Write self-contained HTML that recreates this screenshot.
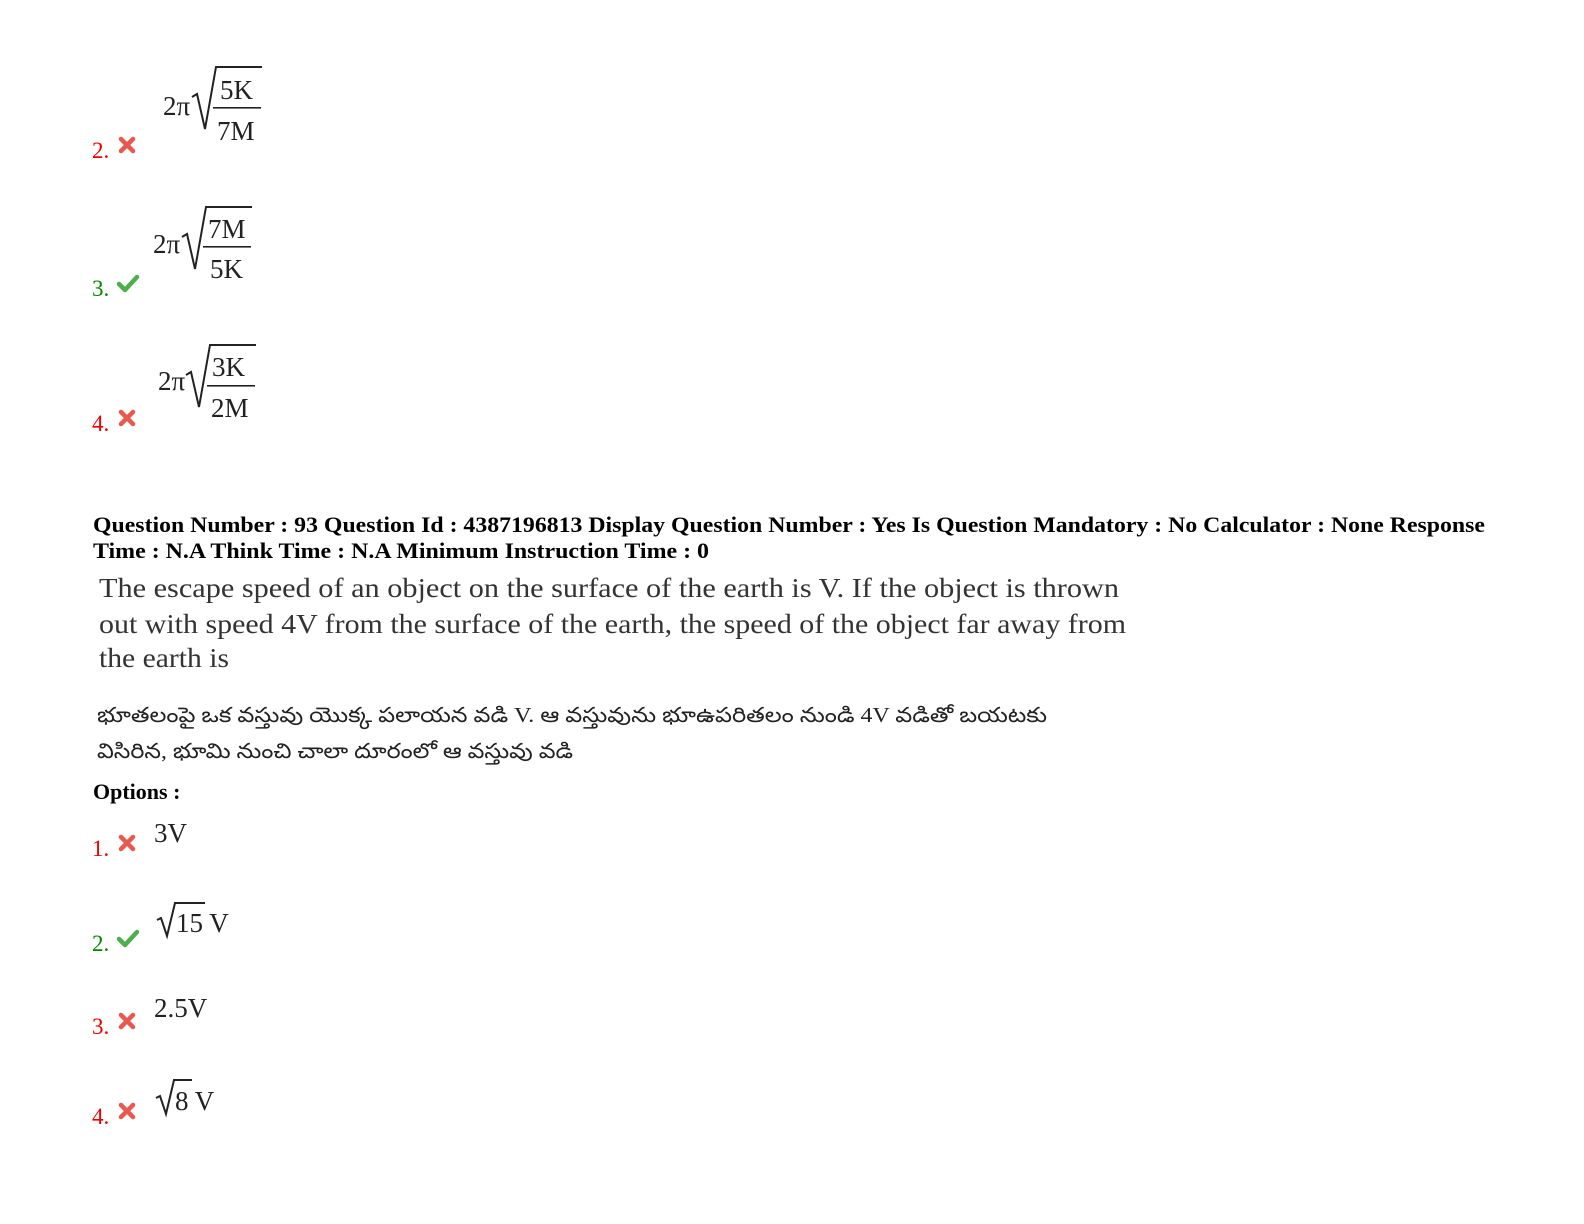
<!DOCTYPE html>
<html><head><meta charset="utf-8"><style>
html,body{margin:0;padding:0;background:#fff;width:1584px;height:1224px;overflow:hidden}
svg{display:block}
.n{font-family:"Liberation Serif",serif;font-size:23px}
.m{font-family:"Liberation Serif",serif;fill:#222;font-size:27px}
.h{font-family:"Liberation Serif",serif;font-weight:bold;font-size:22px;fill:#000}
.q{font-family:"Liberation Serif",serif;font-size:27px;fill:#333}
.t{font-family:"Liberation Serif","Noto Sans CJK SC",sans-serif;font-size:21px;fill:#222}
</style></head><body>
<svg width="1584" height="1224" viewBox="0 0 1584 1224" xmlns="http://www.w3.org/2000/svg">
<defs>
<g id="x"><path d="M-6,-6 L6,6 M6,-6 L-6,6" stroke="#e8584f" stroke-width="4.5" stroke-linecap="round"/></g>
<g id="c"><path d="M-9,0 L-3,6 L9,-7" fill="none" stroke="#4cae4c" stroke-width="4.5" stroke-linecap="round" stroke-linejoin="round"/></g>
<g id="sq"><path d="M0,30 L5,27 L13,62 L24,0 L70,0" fill="none" stroke="#222" stroke-width="2"/></g>
</defs>

<!-- option 2 -->
<text class="n" x="92" y="158" fill="#e00">2.</text><use href="#x" x="127" y="145"/>
<text class="m" x="163" y="115" font-size="25">2π</text>
<use href="#sq" x="192" y="67"/>
<text class="m" x="220" y="99">5K</text><rect x="213" y="107" width="48" height="1.6" fill="#222"/><text class="m" x="217" y="140">7M</text>

<!-- option 3 -->
<text class="n" x="92" y="296" fill="#080">3.</text><use href="#c" x="128" y="284"/>
<text class="m" x="153" y="253" font-size="25">2π</text>
<use href="#sq" x="182" y="207"/>
<text class="m" x="208" y="238">7M</text><rect x="203" y="246" width="48" height="1.6" fill="#222"/><text class="m" x="210" y="278">5K</text>

<!-- option 4 -->
<text class="n" x="92" y="431" fill="#e00">4.</text><use href="#x" x="127" y="418"/>
<text class="m" x="158" y="390" font-size="25">2π</text>
<use href="#sq" x="186" y="345"/>
<text class="m" x="212" y="376">3K</text><rect x="207" y="385" width="48" height="1.6" fill="#222"/><text class="m" x="211" y="417">2M</text>

<!-- header -->
<text class="h" x="93" y="532" textLength="1392" lengthAdjust="spacingAndGlyphs">Question Number : 93 Question Id : 4387196813 Display Question Number : Yes Is Question Mandatory : No Calculator : None Response</text>
<text class="h" x="93" y="558" textLength="616" lengthAdjust="spacingAndGlyphs">Time : N.A Think Time : N.A Minimum Instruction Time : 0</text>

<text class="q" x="99" y="597" textLength="1020" lengthAdjust="spacingAndGlyphs">The escape speed of an object on the surface of the earth is V.  If the object is thrown</text>
<text class="q" x="99" y="633" textLength="1027" lengthAdjust="spacingAndGlyphs">out with speed 4V from the surface of the earth, the speed of the object far away from</text>
<text class="q" x="99" y="667" textLength="130" lengthAdjust="spacingAndGlyphs">the earth is</text>

<text class="t" x="97" y="722" textLength="950" lengthAdjust="spacingAndGlyphs">భూతలంపై ఒక వస్తువు యొక్క పలాయన వడి V. ఆ వస్తువును భూఉపరితలం నుండి 4V వడితో బయటకు</text>
<text class="t" x="97" y="758" textLength="476" lengthAdjust="spacingAndGlyphs">విసిరిన, భూమి నుంచి చాలా దూరంలో ఆ వస్తువు వడి</text>

<text class="h" x="93" y="799">Options :</text>

<text class="n" x="92" y="856" fill="#e00">1.</text><use href="#x" x="127" y="843"/>
<text class="m" x="154" y="842">3V</text>

<text class="n" x="92" y="951" fill="#080">2.</text><use href="#c" x="128" y="939"/>
<path d="M157,920 L161,918 L167,936 L175,903 L205,903" fill="none" stroke="#222" stroke-width="2"/>
<text class="m" x="176" y="932">15 V</text>

<text class="n" x="92" y="1034" fill="#e00">3.</text><use href="#x" x="127" y="1021"/>
<text class="m" x="154" y="1017">2.5V</text>

<text class="n" x="92" y="1124" fill="#e00">4.</text><use href="#x" x="127" y="1111"/>
<path d="M156,1098 L160,1096 L166,1114 L174,1080 L192,1080" fill="none" stroke="#222" stroke-width="2"/>
<text class="m" x="175" y="1110">8 V</text>
</svg>
</body></html>
